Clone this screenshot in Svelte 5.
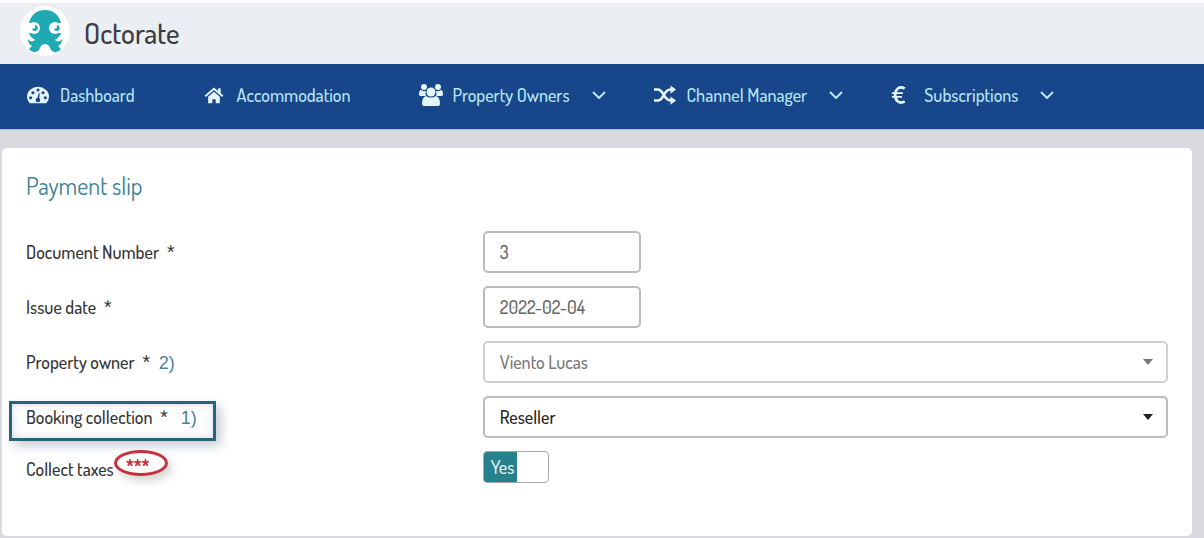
<script>
  const menu = [
    { label: 'Dashboard', icon: 'gauge', sub: false },
    { label: 'Accommodation', icon: 'home', sub: false },
    { label: 'Property Owners', icon: 'users', sub: true },
    { label: 'Channel Manager', icon: 'shuffle', sub: true },
    { label: 'Subscriptions', icon: 'euro', sub: true },
  ];

  let slip = $state({
    number: '3',
    issueDate: '2022-02-04',
    owner: 'Viento Lucas',
    collection: 'Reseller',
    taxes: true,
  });
</script>

{#snippet menuIcon(name)}
  <svg class="icon {name}" viewBox="0 0 24 24" aria-hidden="true">
    {#if name === 'gauge'}
      <path fill="currentColor" d="M3 21Q0 18 0 14a12 11 0 0 1 24 0q0 4-3 7z" />
      <g fill="#17468b">
        <circle cx="4" cy="15" r="1.7" /><circle cx="6.500" cy="9.500" r="1.7" /><circle cx="12" cy="6.500" r="1.7" />
        <circle cx="17.500" cy="9.500" r="1.7" /><circle cx="20" cy="15" r="1.7" /><circle cx="12" cy="17.500" r="2.500" />
        <path d="M11 17l1.800-7 1.200.3-1 7z" />
      </g>
    {:else if name === 'home'}
      <path fill="currentColor" d="M12 8l7 6v8h-5v-5h-4v5H5v-8z" />
      <path fill="none" stroke="currentColor" stroke-width="2.400" d="M1.500 13.500L12 4.500l10.500 9" />
      <path fill="currentColor" d="M17 4h3v7l-3-2.500z" />
    {:else if name === 'users'}
      <g fill="currentColor">
        <circle cx="5" cy="4" r="3" /><circle cx="19" cy="4" r="3" />
        <path d="M0 12q0-5 2-5 3 2 5 1-1 3 0 5H2q-2 0-2-1zM24 12q0-5-2-5-3 2-5 1 1 3 0 5h5q2 0 2-1z" />
        <circle cx="12" cy="9" r="4.500" />
        <path d="M7 13q5 3 10 0 4 1 4 8 0 2-2 2H5q-2 0-2-2 0-7 4-8z" />
      </g>
    {:else if name === 'shuffle'}
      <g fill="none" stroke="currentColor" stroke-width="2.800">
        <path d="M0 6h4c7 0 6 12 14 12h2M0 18h4c7 0 6-12 14-12h2" />
      </g>
      <path fill="currentColor" d="M18 1.500l6 4.500-6 4.500zM18 13.500l6 4.500-6 4.500z" />
    {:else}
      <g fill="none" stroke="currentColor" stroke-width="3">
        <path d="M15 5C9 1.500 4.500 6 4.500 12S9 22.500 15 19" />
        <path stroke-width="2" d="M1 10h12M1 14h11" />
      </g>
    {/if}
  </svg>
{/snippet}

<div class="page">
  <header class="brand">
    <svg class="logo" viewBox="0 0 50 50" aria-hidden="true">
      <circle cx="25" cy="25" r="25" fill="#fff" />
      <path
        fill="#1fa9b3"
        d="M25 4C16 4 10 10 9 18v9c1 4 4 5 6 7-2 2-5 2-7-1 0 4 2 6 4 7l-3 3c3 4 9 4 11-1 1-3 3-4 5-4s4 1 5 4c2 5 8 5 11 1l-3-3c2-1 4-3 4-7-2 3-5 3-7 1 2-2 5-3 6-7v-9C40 10 34 4 25 4z"
      />
      <circle cx="14" cy="22" r="6" fill="#fff" />
      <circle cx="35" cy="22" r="6" fill="#fff" />
      <path fill="#fff" d="M8 17h6v10H8zM36 17h6v10h-6z" />
      <path fill="#1fa9b3" d="M15 19a3 3 0 1 1-3 4l3-1zM37 19a3 3 0 1 1-3 4l3-1z" />
    </svg>
    <span class="brand-name">Octorate</span>
  </header>

  <nav class="menu">
    {#each menu as item}
      <a href="#{item.icon}" class="menu-item" class:has-sub={item.sub}>
        <span class="icon-slot">{@render menuIcon(item.icon)}</span>
        <span>{item.label}</span>
        {#if item.sub}
          <svg class="chevron" viewBox="0 0 14 8" aria-hidden="true">
            <path d="M1 1l6 6 6-6" fill="none" stroke="currentColor" stroke-width="2" />
          </svg>
        {/if}
      </a>
    {/each}
  </nav>

  <main>
    <form class="card">
      <h1>Payment slip</h1>

      <div class="row">
        <label for="number">Document Number <span class="req">*</span></label>
        <input id="number" class="field short" type="text" bind:value={slip.number} />
      </div>

      <div class="row">
        <label for="issue-date">Issue date <span class="req">*</span></label>
        <input id="issue-date" class="field short" type="text" bind:value={slip.issueDate} />
      </div>

      <div class="row">
        <label for="owner">Property owner <span class="req">*</span> <span class="note">2)</span></label>
        <div class="select muted">
          <select id="owner" class="field" bind:value={slip.owner}>
            <option>Viento Lucas</option>
          </select>
        </div>
      </div>

      <div class="row">
        <label for="collection" class="boxed">Booking collection <span class="req">*</span> <span class="note wide">1)</span></label>
        <div class="select">
          <select id="collection" class="field" bind:value={slip.collection}>
            <option>Reseller</option>
          </select>
        </div>
      </div>

      <div class="row">
        <label for="taxes" class="taxes">Collect taxes<span class="stars">***</span></label>
        <label class="switch">
          <input id="taxes" type="checkbox" bind:checked={slip.taxes} />
          <span class="side">{slip.taxes ? 'Yes' : 'No'}</span>
        </label>
      </div>
    </form>
  </main>
</div>

<style>
  :global(body) { background: #d8dae0; }
  .page { font-family: Dosis, Lato, "Liberation Sans", sans-serif; font-size: 18px; font-weight: 500; line-height: 20px; color: #333; }
  .page * { box-sizing: border-box; }

  .brand { display: flex; align-items: center; gap: 14px; height: 64px; padding: 0 20px; background: #ebeef3; border-top: 3px solid #fff; }
  .logo { width: 50px; height: 50px; margin-bottom: 6px; }
  .brand-name { margin-bottom: 2px; font-size: 29px; line-height: 32px; color: #3b3d45; }

  .menu { display: flex; align-items: center; height: 66px; padding: 0 27px 3px; background: #17468b; border-bottom: 1px solid #a9c4de; }
  .menu-item { display: flex; align-items: center; margin-right: 69px; color: #b9e6f5; text-decoration: none; white-space: nowrap; }
  .menu-item.has-sub { margin-right: 48px; }
  .icon-slot { display: flex; width: 33px; color: #e4f6fb; }
  .icon { width: 22px; height: 22px; }
  .icon.home { width: 20px; }
  .icon.users { width: 24px; height: 24px; }
  .chevron { width: 14px; height: 8px; margin-left: 22px; }

  main { padding: 18px 12px 2px 2px; }
  .card { padding: 24px 24px 53px; background: #fff; border-radius: 5px; }
  h1 { margin: 0 0 31px; font-size: 24px; line-height: 28px; font-weight: 400; color: #3b8494; }

  .row { display: grid; grid-template-columns: 2fr 3fr; align-items: center; margin-top: 13px; }
  label { justify-self: start; }
  .req { margin-left: 4px; }
  .note { margin-left: 5px; font-family: "Liberation Sans", sans-serif; font-size: 18px; font-weight: 400; color: #4a7f9e; }
  .note.wide { margin-left: 9px; }
  .boxed { margin: 3px 0 -4px -17px; padding: 3px 16px 10px 14px; border: 3px solid #2b6379; box-shadow: 5px 5px 10px #c8cdd5, inset 0 0 10px #d3dce9; }

  .field { width: 100%; height: 42px; padding: 0 15px; background: #fff; border: 2px solid #bbb; border-radius: 5px; font: inherit; color: #666; outline: none; }
  .field.short { width: 158px; }
  .select { position: relative; color: #222; }
  .select .field { appearance: none; color: inherit; }
  .select.muted { color: #777; }
  .select.muted .field { border-color: #d0d0d0; }
  .select::after { content: ''; position: absolute; top: 18px; right: 15px; border: 5px solid transparent; border-top: 6px solid currentColor; border-bottom: 0; pointer-events: none; }

  .taxes { display: flex; align-items: flex-end; height: 32px; padding-bottom: 4px; }
  .stars { width: 54px; height: 26px; margin-bottom: 3px; padding-right: 6px; border: 3px solid #c5303d; border-radius: 50%; box-shadow: 4px 5px 8px #d4d4d4; font-size: 16px; font-weight: 800; line-height: 24px; text-align: center; color: #c5303d; }
  .switch { display: flex; width: 66px; height: 32px; background: #fff; border: 1px solid #aaa; border-radius: 4px; overflow: hidden; cursor: pointer; }
  .switch input { position: absolute; opacity: 0; }
  .side { width: 33px; padding-left: 7px; background: #25818c; line-height: 30px; color: #e4f4f6; }
</style>
